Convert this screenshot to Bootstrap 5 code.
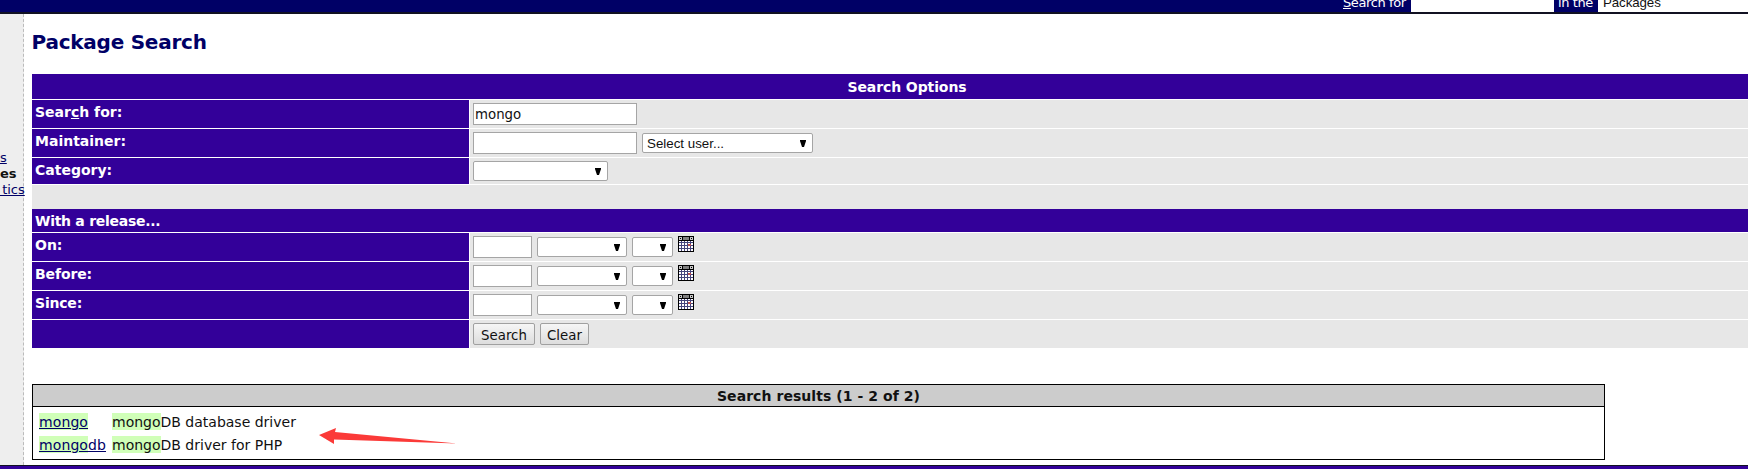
<!DOCTYPE html>
<html lang="en">
<head>
<meta charset="utf-8">
<title>Package Search</title>
<link href="https://cdn.jsdelivr.net/npm/bootstrap@5.3.0/dist/css/bootstrap.min.css" rel="stylesheet">
<style>
body{font:14px/17px "DejaVu Sans",sans-serif;color:#111;background:#fff;width:1748px;height:469px}
.topbar{height:14px;background:#006;border-bottom:2px solid #112;color:#fff;padding-left:1343px}
.topbar span{line-height:17px;margin-top:-6px;white-space:nowrap;flex:none}
.topbar>span{font-size:13px;letter-spacing:-.4px}
.topbar .fld{background:#fff;height:12px;flex:none}
.topbar .pk{font:13.33px/17px "Liberation Sans",sans-serif;color:#111;padding-left:5px;letter-spacing:-.1px}
.side{width:24px;background:#eee;border-right:1px dashed #bbb;padding-top:136px;line-height:16px;font-size:13px}
.side u,.lnk{color:#006 !important;text-decoration:underline !important}
.side div{height:16px;white-space:pre}
.pane{padding-left:8px;height:451px}
h1{font-size:20px;line-height:24px;font-weight:700;color:#006;margin:16px 0 20px;letter-spacing:-.24px;text-indent:-.5px}
.opts{width:1750px;display:grid;grid-template-columns:437px 1fr;column-gap:1px;font-size:14px}
.opts>*{margin-bottom:1px;height:28px}
.opts .lab{background:#309;color:#fff;font-weight:700;padding:4px 3px 0}
.opts .val{background:#e7e7e7;padding:3px 3px 0;display:flex;gap:5px;align-items:flex-start}
.opts .wide{grid-column:1/3}
.tx{height:22px;border:1px solid #a5a5a5;border-radius:0;background:#fff;padding:0 1px;font:13.33px/22px "DejaVu Sans",sans-serif;color:#111}
.sel{height:20px;border:1px solid #a5a5a5;border-radius:2px;background:#fff;padding:0 4px;font:13.33px/19px "Liberation Sans",sans-serif;color:#111;display:flex;justify-content:space-between;margin-top:1px}
.sel svg{margin:6px 2px 0 auto}
.push{height:22px;border:1px solid #a0a0a0;border-radius:2px;background:linear-gradient(#f6f6f6,#ddd);font:13.33px/21px "DejaVu Sans",sans-serif;color:#111;padding:1px 0 0;text-align:center}
.results{width:1573px;height:76px;border:1px solid #000;margin-top:35px}
.rhead{height:22px;background:#ccc;border-bottom:1px solid #000;font-weight:700;text-align:center;line-height:23px;letter-spacing:.06px}
.rrow{height:23px;padding-left:6px;line-height:18px}
.rrow .nm{width:73px;letter-spacing:.1px}
.hl{background:#d0ffb8;display:inline-block;height:17px}
.arrow{position:absolute;left:319px;top:427px}
.foot{height:4px;background:#309;border-top:1px solid #112}
</style>
</head>
<body class="overflow-hidden position-relative">
<svg width="0" height="0" class="position-absolute"><defs>
<symbol id="dn" viewBox="0 0 6 7"><path d="M0 0h6v1L4 7H2L0 1z" fill="#000"/></symbol>
<pattern id="dots" width="3" height="3" patternUnits="userSpaceOnUse"><path d="M0 0h2v2H0z" fill="#fff"/></pattern>
<symbol id="cal" viewBox="0 0 16 16"><path d="M0 0h16v16H0z" fill="#000"/><path d="M1 5h14v10H1z" fill="#44447c"/><path d="M1 1h3v3H1zM12 1h3v3h-3z" fill="#c8c8c8"/><path d="M2 2h1v1H2zM13 2h1v1h-1z" fill="#000"/><path d="M5 1h6v3H5z" fill="#808080"/><path d="M1 5h2v1H1zM4 5h2v1H4zM7 5h2v1H7zM10 5h2v1h-2zM13 5h2v1h-2zM1 7h2v2H1zM4 7h2v2H4zM7 7h2v2H7zM10 7h2v2h-2zM13 7h2v2h-2zM1 10h2v2H1zM4 10h2v2H4zM7 10h2v2H7zM10 10h2v2h-2zM13 10h2v2h-2zM1 13h2v2H1zM4 13h2v2H4zM7 13h2v2H7zM10 13h2v2h-2zM13 13h2v2h-2z" fill="#fff"/><path d="M10 8h3v2h-3z" fill="#b65050"/></symbol>
</defs></svg>
<header class="topbar d-flex overflow-hidden">
<span style="width:68px"><u>S</u>earch for</span><div class="fld" style="width:143px"></div><span style="width:44px;padding-left:4px">in the</span><div class="fld d-flex" style="width:150px"><span class="pk">Packages</span></div>
</header>
<div class="d-flex">
<aside class="side flex-shrink-0"><div><u>s</u></div><div class="fw-bold">es</div><div><u style="margin-left:-2px">&nbsp;tics</u></div></aside>
<main class="pane flex-shrink-0">
<h1>Package Search</h1>
<section class="opts">
<div class="lab wide text-center" style="height:25px;padding-top:5px;letter-spacing:-.1px">Search Options</div>
<div class="lab">Sear<u>c</u>h for:</div><div class="val"><div class="tx" style="width:164px">mongo</div></div>
<div class="lab">Maintainer:</div><div class="val"><div class="tx" style="width:164px"></div><div class="sel" style="width:171px">Select user...<svg width="6" height="7"><use href="#dn"/></svg></div></div>
<div class="lab" style="height:26px">Category:</div><div class="val" style="height:26px;padding-top:2px"><div class="sel" style="width:135px"><svg width="6" height="7"><use href="#dn"/></svg></div></div>
<div class="wide val mb-0" style="height:24px"></div>
<div class="lab wide" style="height:23px;letter-spacing:-.28px">With a release...</div>
<div class="lab">On:</div><div class="val"><div class="tx" style="width:59px"></div><div class="sel" style="width:90px"><svg width="6" height="7"><use href="#dn"/></svg></div><div class="sel" style="width:41px"><svg width="6" height="7"><use href="#dn"/></svg></div><svg width="16" height="16"><use href="#cal"/></svg></div>
<div class="lab" style="letter-spacing:-.12px">Before:</div><div class="val"><div class="tx" style="width:59px"></div><div class="sel" style="width:90px"><svg width="6" height="7"><use href="#dn"/></svg></div><div class="sel" style="width:41px"><svg width="6" height="7"><use href="#dn"/></svg></div><svg width="16" height="16"><use href="#cal"/></svg></div>
<div class="lab" style="letter-spacing:-.2px">Since:</div><div class="val"><div class="tx" style="width:59px"></div><div class="sel" style="width:90px"><svg width="6" height="7"><use href="#dn"/></svg></div><div class="sel" style="width:41px"><svg width="6" height="7"><use href="#dn"/></svg></div><svg width="16" height="16"><use href="#cal"/></svg></div>
<div class="lab"></div><div class="val"><button class="push" style="width:62px">Search</button><button class="push" style="width:49px">Clear</button></div>
</section>
<section class="results">
<div class="rhead">Search results (1 - 2 of 2)</div>
<div class="rrow d-flex" style="margin-top:6px"><div class="nm"><a class="lnk"><span class="hl lnk">mongo</span></a></div><div><span class="hl">mongo</span>DB database driver</div></div>
<div class="rrow d-flex"><div class="nm"><a class="lnk"><span class="hl lnk">mongo</span>db</a></div><div><span class="hl">mongo</span>DB driver for PHP</div></div>
</section>
</main>
</div>
<footer class="foot"></footer>
<svg class="arrow" width="140" height="18"><path d="M0 8L17 1 16 5 138 16.500 15 12.500 15 17z" fill="#fb3a38"/></svg>
<script src="https://cdn.jsdelivr.net/npm/bootstrap@5.3.0/dist/js/bootstrap.bundle.min.js"></script>
</body>
</html>
